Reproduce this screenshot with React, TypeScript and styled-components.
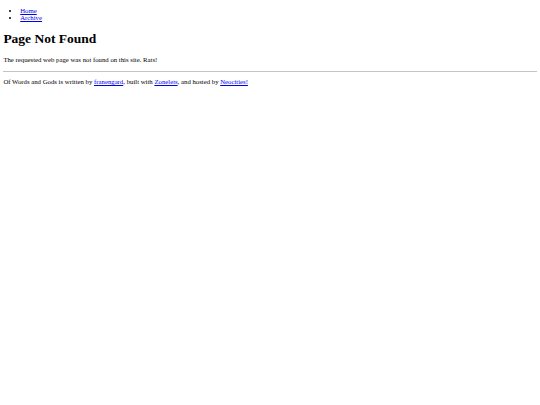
import React from "react";
import styled, { createGlobalStyle } from "styled-components";

const S = 540 / 1280;
const px = (v: number) => `${(v * S).toFixed(3)}px`;

const Global = createGlobalStyle`
  html, body { background: #ffffff; }
  body {
    margin: 0 ${px(8)} ${px(8)};
    font-family: "Liberation Serif", "Times New Roman", serif;
    font-size: ${px(16)};
    color: #000000;
  }
  a { color: #0000ee; text-decoration: underline; }
`;

const NavList = styled.ul`
  margin: 7px 0 ${px(16)};
  padding-left: ${px(40)};
  list-style: disc;
`;

const NavItem = styled.li``;

const Title = styled.h1`
  font-size: ${px(32)};
  font-weight: bold;
  margin: 9.5px 0 ${px(21.44)};
`;

const Paragraph = styled.p`
  margin: ${px(16)} 0;
`;

const Rule = styled.hr`
  margin: 8px 0 ${px(8)};
  height: 0;
  border: none;
  border-top: 1px solid #c4c4c4;
`;

const Footer = styled.footer``;

export default function App() {
  return (
    <>
      <Global />
      <nav>
        <NavList>
          <NavItem>
            <a href="#">Home</a>
          </NavItem>
          <NavItem>
            <a href="#">Archive</a>
          </NavItem>
        </NavList>
      </nav>
      <main>
        <Title>Page Not Found</Title>
        <Paragraph>The requested web page was not found on this site. Rats!</Paragraph>
      </main>
      <Rule />
      <Footer>
        <Paragraph>
          Of Words and Gods is written by <a href="#">franengard</a>, built with{" "}
          <a href="#">Zonelets</a>, and hosted by <a href="#">Neocities!</a>
        </Paragraph>
      </Footer>
    </>
  );
}
